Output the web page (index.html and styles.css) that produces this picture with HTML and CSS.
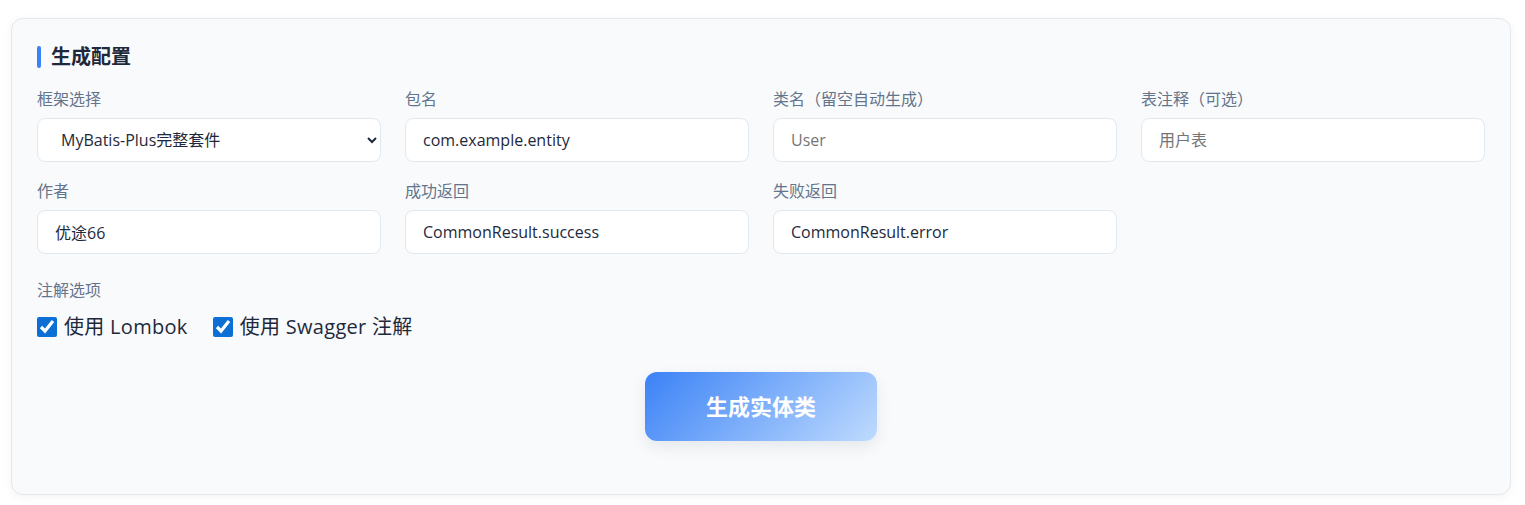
FILE: index.html
```html
<!DOCTYPE html>
<html lang="zh-CN">
<head>
    <meta charset="UTF-8" />
    <meta name="viewport" content="width=device-width, initial-scale=1.0" />
    <title>实体类生成</title>
    <link rel="stylesheet" href="styles.css">
</head>
<body>
    <div class="page">
        <section class="card">
            <h2 class="card-title">生成配置</h2>

            <div class="form-grid">
                <div class="field">
                    <label for="framework">框架选择</label>
                    <select id="framework">
                        <option>MyBatis-Plus完整套件</option>
                        <option>MyBatis</option>
                        <option>JPA</option>
                    </select>
                </div>
                <div class="field">
                    <label for="packageName">包名</label>
                    <input type="text" id="packageName" value="com.example.entity" />
                </div>
                <div class="field">
                    <label for="className">类名（留空自动生成）</label>
                    <input type="text" id="className" placeholder="User" />
                </div>
                <div class="field">
                    <label for="tableComment">表注释（可选）</label>
                    <input type="text" id="tableComment" placeholder="用户表" />
                </div>
                <div class="field">
                    <label for="author">作者</label>
                    <input type="text" id="author" value="优途66" />
                </div>
                <div class="field">
                    <label for="successResult">成功返回</label>
                    <input type="text" id="successResult" value="CommonResult.success" />
                </div>
                <div class="field">
                    <label for="errorResult">失败返回</label>
                    <input type="text" id="errorResult" value="CommonResult.error" />
                </div>
            </div>

            <div class="options">
                <div class="options-label">注解选项</div>
                <div class="checks">
                    <label class="check"><input type="checkbox" id="useLombok" checked /> 使用 Lombok</label>
                    <label class="check"><input type="checkbox" id="useSwagger" checked /> 使用 Swagger 注解</label>
                </div>
            </div>

            <div class="actions">
                <button type="button" class="btn-generate">生成实体类</button>
            </div>
        </section>
    </div>
</body>
</html>
```

FILE: styles.css
```css
* {
    box-sizing: border-box;
}

body {
    margin: 0;
    background-color: #ffffff;
    color: #1e293b;
    font-family: "Open Sans", "Noto Sans CJK SC", sans-serif;
}

.page {
    padding: 18px 14px 10px 11px;
}

.card {
    background-color: #f8fafc;
    border: 1px solid #e2e8f0;
    border-radius: 12px;
    padding: 25px;
    box-shadow: 0 2px 10px rgba(15, 23, 42, 0.05);
}

.card-title {
    display: flex;
    align-items: center;
    gap: 10px;
    margin: 0 0 19px;
    font-size: 20px;
    line-height: 26px;
    font-weight: 700;
    color: #1e293b;
}

.card-title::before {
    content: "";
    width: 4px;
    height: 22px;
    border-radius: 2px;
    background-color: #3b82f6;
}

.form-grid {
    display: grid;
    grid-template-columns: repeat(4, 1fr);
    column-gap: 24px;
    row-gap: 19px;
}

.field {
    display: flex;
    flex-direction: column;
}

.field label,
.options-label {
    font-size: 16px;
    line-height: 20px;
    color: #64748b;
}

.field label {
    margin-bottom: 9px;
}

.field input,
.field select {
    height: 44px;
    padding: 0 17px;
    border: 1px solid #e2e8f0;
    border-radius: 8px;
    background-color: #ffffff;
    color: #1e293b;
    font-family: inherit;
    font-size: 16px;
}

.field select {
    padding-left: 19px;
    padding-right: 12px;
}

.field input::placeholder {
    color: #757575;
}

.options {
    margin-top: 26px;
}

.checks {
    display: flex;
    gap: 25px;
    margin-top: 14px;
}

.check {
    display: flex;
    align-items: center;
    gap: 7px;
    font-size: 20px;
    line-height: 26px;
    letter-spacing: 0.3px;
    color: #1e293b;
}

.check input {
    width: 20px;
    height: 20px;
    margin: 0;
    accent-color: #0c6fd6;
}

.actions {
    display: flex;
    justify-content: center;
    margin: 32px 0 28px;
}

.btn-generate {
    padding: 22px 61px;
    border: none;
    border-radius: 12px;
    background: linear-gradient(135deg, #3b82f6, #bfdbfe);
    color: #ffffff;
    font-family: inherit;
    font-size: 22px;
    line-height: 25px;
    font-weight: 700;
    box-shadow: 0 6px 16px rgba(15, 23, 42, 0.08);
    cursor: pointer;
}
```
